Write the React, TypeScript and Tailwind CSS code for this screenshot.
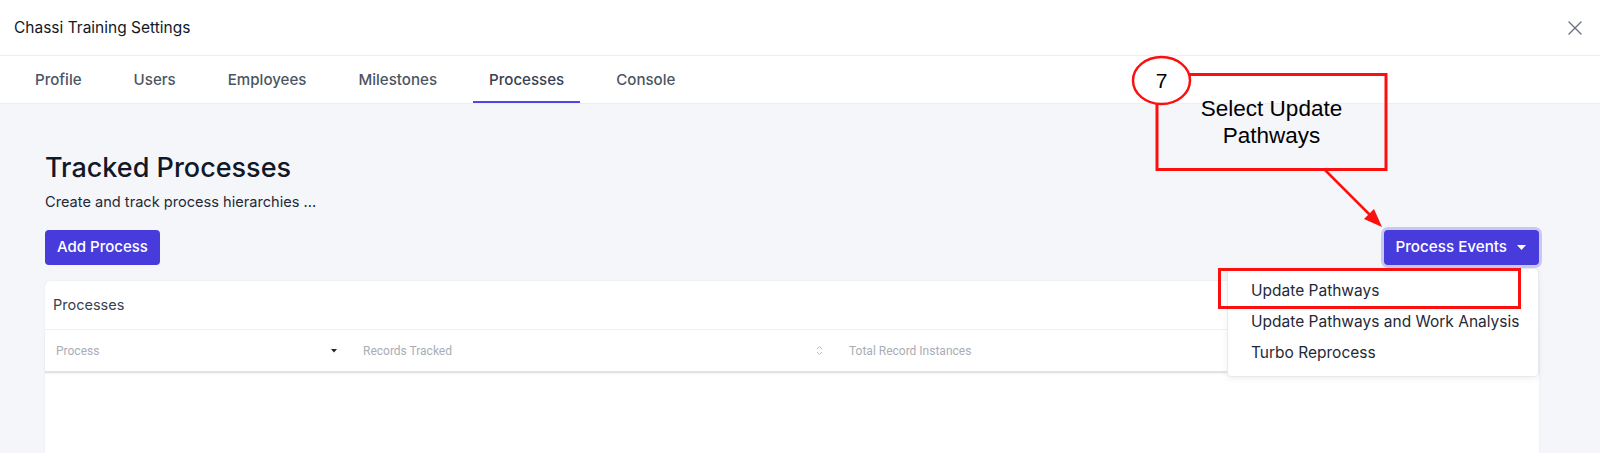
import React from "react";

const tabs = ["Profile", "Users", "Employees", "Milestones", "Processes", "Console"];

export default function App() {
  return (
    <div className="relative w-[1600px] h-[453px] overflow-hidden bg-white font-['Inter',sans-serif] text-[#111827]">
      {/* Header */}
      <div className="h-[56px] flex items-center justify-between pl-[14px] pr-[13px] border-b border-[#eceef2]">
        <div className="text-[15.5px] leading-[20px] text-[#111827]">Chassi Training Settings</div>
        <svg width="24" height="24" viewBox="0 0 24 24" fill="none" stroke="#6b7280" strokeWidth="1.4" strokeLinecap="round">
          <path d="M18 6 6 18" />
          <path d="m6 6 12 12" />
        </svg>
      </div>

      {/* Tabs */}
      <div className="h-[48px] flex pl-[19px] gap-5 border-b border-[#eceef2]">
        {tabs.map((t) => (
          <div
            key={t}
            className={
              t === "Processes"
                ? "h-full px-4 pt-[4px] flex items-center text-[15.1px] font-medium text-[#374151] border-b-2 border-[#4f46e5]"
                : "h-full px-4 pt-[4px] flex items-center text-[15.1px] font-medium text-[#4b5563] border-b-2 border-transparent"
            }
          >
            {t}
          </div>
        ))}
      </div>

      {/* Content */}
      <div className="bg-[#f5f6fa] h-[349px] pl-[45px] pr-[61px] pt-[46px]">
        <h1 className="text-[27px] leading-[36px] font-medium text-[#111827]">Tracked Processes</h1>
        <p className="mt-[4px] text-[14.6px] leading-[24px] text-[#1f2937]">Create and track process hierarchies ...</p>

        <div className="mt-[16px] flex items-start justify-between">
          <button className="h-[35px] px-[12px] rounded-[4px] bg-[#473bdc] text-white text-[15px] font-medium">
            Add Process
          </button>
          <div className="relative">
            <button className="h-[35px] pl-[12px] pr-[13px] rounded-[4px] bg-[#473bdc] text-white text-[15.2px] font-medium flex items-center gap-[10px] ring-[3px] ring-[#c9c8f3]">
              <span>Process Events</span>
              <svg width="9" height="5" viewBox="0 0 9 5">
                <path d="M0 0h9L4.5 5z" fill="white" />
              </svg>
            </button>
            <div className="absolute right-0 top-[38px] z-20 w-[312px] pt-[6px] pb-[8px] bg-white rounded-[4px] border border-[#e7e9ee] shadow-[0_2px_6px_rgba(0,0,0,0.06)]">
              {["Update Pathways", "Update Pathways and Work Analysis", "Turbo Reprocess"].map((it) => (
                <div key={it} className="h-[31px] flex items-center pl-[23px] text-[15.5px] text-[#1f2937] whitespace-nowrap">
                  {it}
                </div>
              ))}
            </div>
          </div>
        </div>

        {/* Card */}
        <div className="mt-[16px] bg-white rounded-t-[6px] shadow-[0_0_3px_rgba(0,0,0,0.05)] h-[200px]">
          <div className="h-[49px] flex items-center pl-[8px] border-b border-[#eef0f3] text-[14.5px] text-[#374151]">
            Processes
          </div>
          <div className="h-[43px] flex items-center border-b-2 border-[#dfe3e8] shadow-[0_1px_2px_rgba(0,0,0,0.05)] font-['Roboto',sans-serif] text-[12px] text-[#a9adb6]">
            <div className="w-[307px] flex items-center justify-between pl-[11px] pr-[15px]">
              <span>Process</span>
              <svg width="6" height="4" viewBox="0 0 6 4">
                <path d="M0 0h6L3 3.5z" fill="#1e293b" />
              </svg>
            </div>
            <div className="w-[487px] flex items-center justify-between pl-[11px] pr-[16px]">
              <span>Records Tracked</span>
              <svg width="7" height="11" viewBox="0 0 7 11" fill="none" stroke="#b8bcc4" strokeWidth="1">
                <path d="M1 4 3.5 1.5 6 4" />
                <path d="M1 7 3.5 9.5 6 7" />
              </svg>
            </div>
            <div className="pl-[10px]">Total Record Instances</div>
          </div>
        </div>
      </div>

      {/* Annotation overlay */}
      <div className="absolute left-[1218px] top-[268px] w-[303px] h-[41px] border-[3px] border-[#fb1010] z-30" />
      <svg className="absolute left-0 top-0 z-30 pointer-events-none" width="1600" height="453" viewBox="0 0 1600 453">
        <rect x="1157" y="74.5" width="229" height="95" fill="none" stroke="#fb1010" strokeWidth="3" />
        <line x1="1325" y1="170" x2="1374" y2="219" stroke="#fb1010" strokeWidth="2.5" />
        <path d="M1382 227 L1364 219 L1374 209 Z" fill="#fb1010" />
        <ellipse cx="1161.5" cy="80.5" rx="28.5" ry="23.5" fill="white" stroke="#fb1010" strokeWidth="2.5" />
      </svg>
      <div className="absolute left-[1132px] top-[57px] w-[59px] h-[47px] z-40 flex items-center justify-center font-['Liberation_Sans',Arial,sans-serif] text-[21px] text-black">
        7
      </div>
      <div className="absolute left-[1157px] top-[95px] w-[229px] z-40 text-center font-['Liberation_Sans',Arial,sans-serif] text-[22.5px] leading-[27px] text-black">
        Select Update
        <br />
        Pathways
      </div>
    </div>
  );
}
